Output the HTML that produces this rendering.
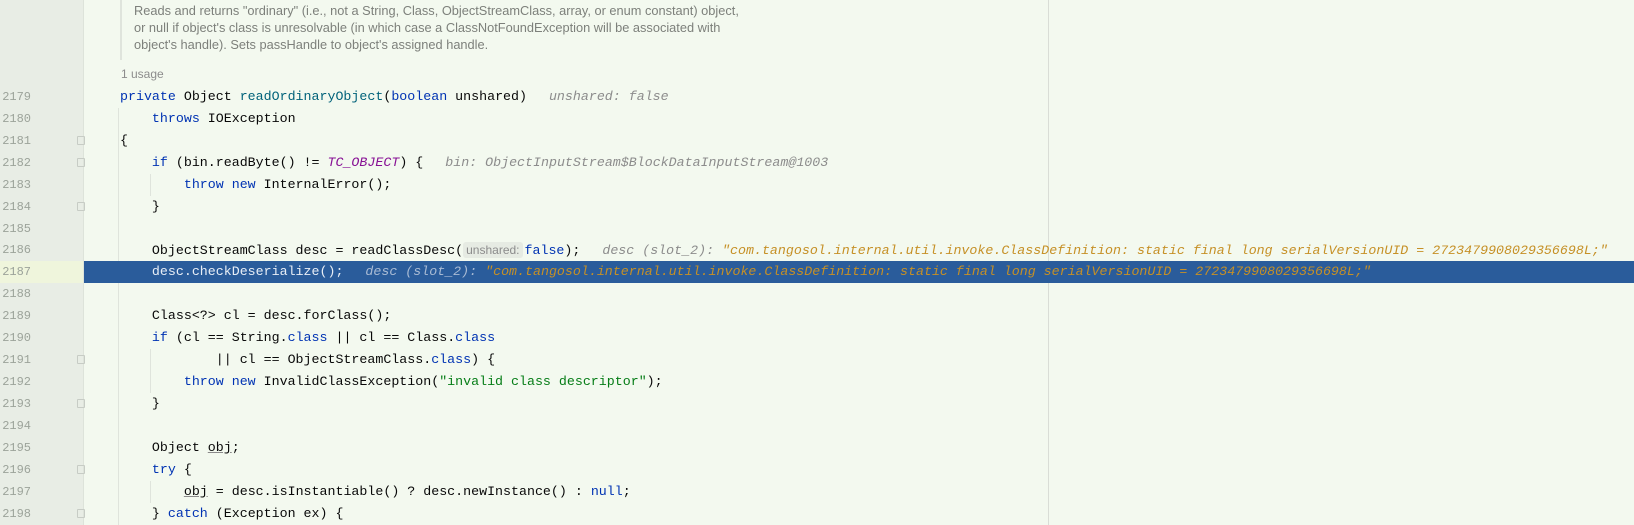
<!DOCTYPE html>
<html><head><meta charset="utf-8"><style>
body{margin:0;width:1634px;height:525px;overflow:hidden;background:#f3f9ef;position:relative;font-family:"Liberation Mono",monospace;}
.gut{position:absolute;left:0;top:0;width:83px;height:525px;background:#e8ede5;border-right:1px solid #dde3da;}
.ln{position:absolute;left:0;width:31px;text-align:right;font-size:12px;color:#9ca39a;height:22px;line-height:22px;}
.row{position:absolute;left:84px;right:0;height:22px;line-height:22px;font-size:13.3px;color:#080808;white-space:pre;}
.c{position:absolute;left:36px;}
.k{color:#0033b3}.m{color:#00627a}.s{color:#067d17}.i{font-style:italic;color:#871094}
.h{font-style:italic;color:#8c8c8c}.v{font-style:italic;color:#c69026}
.sel{background:#2a5c9b;color:#e8eef6}
.sel .h{color:#a9bbd4}
.doc{position:absolute;left:134px;top:2px;font-family:"Liberation Sans",sans-serif;font-size:12.8px;color:#7d807b;line-height:17.2px;}
.bar{position:absolute;left:120px;top:0;width:2px;height:60px;background:#dfe4dc;}
.fold{position:absolute;left:77px;width:8px;height:9px;border:1px solid #c7ccc5;border-radius:1px;box-sizing:border-box;}
.guide{position:absolute;width:1px;background:#dfe4dc;}
.inl{font-family:"Liberation Sans",sans-serif;font-size:12px;color:#8c8c8c;background:#e6ebe3;border-radius:3px;padding:1px 3px;margin-right:2px;}
.u{text-decoration:underline;text-decoration-color:#8a8a8a}
.g{display:inline-block;width:6px}
</style></head><body>
<div class="gut"></div>
<div class="bar"></div>
<div class="doc">Reads and returns "ordinary" (i.e., not a String, Class, ObjectStreamClass, array, or enum constant) object,<br>or null if object's class is unresolvable (in which case a ClassNotFoundException will be associated with<br>object's handle). Sets passHandle to object's assigned handle.</div>
<div style="position:absolute;left:121px;top:67px;font-family:'Liberation Sans',sans-serif;font-size:12px;color:#8c8c8c">1 usage</div>
<div style="position:absolute;left:0;top:261px;width:83px;height:22px;background:#eff5dc"></div>
<div class="guide" style="left:118px;top:108px;height:417px"></div>
<div class="guide" style="left:150px;top:174px;height:22px"></div>
<div class="guide" style="left:150px;top:349px;height:44px"></div>
<div class="guide" style="left:150px;top:481px;height:22px"></div>
<div style="position:absolute;left:1048px;top:0;width:1px;height:525px;background:#d9ddd6"></div>

<div class="ln" style="top:86px">2179</div><div class="ln" style="top:108px">2180</div><div class="ln" style="top:130px">2181</div><div class="ln" style="top:152px">2182</div><div class="ln" style="top:174px">2183</div><div class="ln" style="top:196px">2184</div><div class="ln" style="top:218px">2185</div><div class="ln" style="top:239px">2186</div><div class="ln" style="top:261px">2187</div><div class="ln" style="top:283px">2188</div><div class="ln" style="top:305px">2189</div><div class="ln" style="top:327px">2190</div><div class="ln" style="top:349px">2191</div><div class="ln" style="top:371px">2192</div><div class="ln" style="top:393px">2193</div><div class="ln" style="top:415px">2194</div><div class="ln" style="top:437px">2195</div><div class="ln" style="top:459px">2196</div><div class="ln" style="top:481px">2197</div><div class="ln" style="top:503px">2198</div>

<div class="fold" style="top:136px"></div><div class="fold" style="top:158px"></div><div class="fold" style="top:202px"></div><div class="fold" style="top:355px"></div><div class="fold" style="top:399px"></div><div class="fold" style="top:465px"></div><div class="fold" style="top:509px"></div>

<div class="sel" style="position:absolute;top:261px;left:84px;right:0;height:22px"></div>
<div class="row" style="top:86px"><span class="c"><span class="k">private</span> Object <span class="m">readOrdinaryObject</span>(<span class="k">boolean</span> unshared)<span class="g"></span>  <span class="h">unshared: false</span></span></div>
<div class="row" style="top:108px"><span class="c">    <span class="k">throws</span> IOException</span></div>
<div class="row" style="top:130px"><span class="c">{</span></div>
<div class="row" style="top:152px"><span class="c">    <span class="k">if</span> (bin.readByte() != <span class="i">TC_OBJECT</span>) {<span class="g"></span>  <span class="h">bin: ObjectInputStream$BlockDataInputStream@1003</span></span></div>
<div class="row" style="top:174px"><span class="c">        <span class="k">throw new</span> InternalError();</span></div>
<div class="row" style="top:196px"><span class="c">    }</span></div>
<div class="row" style="top:239px"><span class="c">    ObjectStreamClass desc = readClassDesc(<span class="inl">unshared:</span><span class="k">false</span>);<span class="g"></span>  <span class="h">desc (slot_2): </span><span class="v">"com.tangosol.internal.util.invoke.ClassDefinition: static final long serialVersionUID = 2723479908029356698L;"</span></span></div>
<div class="row sel" style="top:261px"><span class="c">    desc.checkDeserialize();<span class="g"></span>  <span class="h">desc (slot_2): </span><span class="v">"com.tangosol.internal.util.invoke.ClassDefinition: static final long serialVersionUID = 2723479908029356698L;"</span></span></div>
<div class="row" style="top:305px"><span class="c">    Class&lt;?&gt; cl = desc.forClass();</span></div>
<div class="row" style="top:327px"><span class="c">    <span class="k">if</span> (cl == String.<span class="k">class</span> || cl == Class.<span class="k">class</span></span></div>
<div class="row" style="top:349px"><span class="c">            || cl == ObjectStreamClass.<span class="k">class</span>) {</span></div>
<div class="row" style="top:371px"><span class="c">        <span class="k">throw new</span> InvalidClassException(<span class="s">"invalid class descriptor"</span>);</span></div>
<div class="row" style="top:393px"><span class="c">    }</span></div>
<div class="row" style="top:437px"><span class="c">    Object <span class="u">obj</span>;</span></div>
<div class="row" style="top:459px"><span class="c">    <span class="k">try</span> {</span></div>
<div class="row" style="top:481px"><span class="c">        <span class="u">obj</span> = desc.isInstantiable() ? desc.newInstance() : <span class="k">null</span>;</span></div>
<div class="row" style="top:503px"><span class="c">    } <span class="k">catch</span> (Exception ex) {</span></div>
</body></html>
